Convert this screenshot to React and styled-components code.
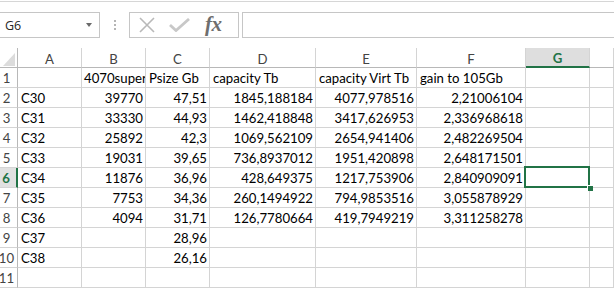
import React from 'react';
import styled, { createGlobalStyle, css } from 'styled-components';

const GREEN = '#217346';
const GRID = '#d4d4d4';

const GlobalStyle = createGlobalStyle`
  body {
    margin: 0;
    background: #fff;
    overflow: hidden;
  }
`;

const Page = styled.div`
  width: 614px;
  height: 292px;
  overflow: hidden;
  font-family: Lato, 'Liberation Sans', sans-serif;
`;

const TopRule = styled.div`
  margin-top: 1px;
  height: 1px;
  background: #d6d6d6;
`;

const FormulaBar = styled.div`
  display: flex;
  height: 26px;
  margin-top: 10px;
`;

const Box = styled.div`
  box-sizing: border-box;
  height: 100%;
  border: 1px solid #c6c6c6;
  background: #fff;
`;

const NameBox = styled(Box)`
  width: 101px;
  margin-left: -1px;
  display: flex;
  align-items: center;
  justify-content: space-between;
  padding: 0 7px 0 5px;
  font-family: 'Open Sans', 'Liberation Sans', sans-serif;
  font-size: 12.5px;
  color: #262626;
`;

const Arrow = styled.span`
  width: 0;
  height: 0;
  border-left: 3.5px solid transparent;
  border-right: 3.5px solid transparent;
  border-top: 4px solid #6a6a6a;
`;

const Grip = styled.div`
  width: 29px;
  display: flex;
  flex-direction: column;
  align-items: center;
  justify-content: center;
  gap: 2px;
`;

const Dot = styled.span`
  width: 2px;
  height: 2px;
  background: #b5b5b5;
`;

const ButtonBox = styled(Box)`
  width: 110px;
  display: flex;
  align-items: center;
  padding-left: 7px;
  gap: 12px;
`;

const Fx = styled.span`
  font-family: 'Liberation Serif', serif;
  font-style: italic;
  font-weight: 700;
  font-size: 21px;
  color: #6e6e6e;
  margin-left: 3px;
  margin-top: -2px;
  letter-spacing: -0.5px;
`;

const FormulaInput = styled(Box)`
  flex: 1;
  margin-left: 3px;
  border-right: none;
`;

const Sheet = styled.div`
  margin-top: 10px;
  display: grid;
  grid-template-columns: 18px 64px 64px 64px 106px 101px 109px 64px 1fr;
  grid-auto-rows: 20px;
  font-size: 13.2px;
  color: #000;
`;

const Cell = styled.div`
  position: relative;
  box-sizing: border-box;
  border-right: 1px solid ${GRID};
  border-bottom: 1px solid ${GRID};
  display: flex;
  align-items: center;
  padding: 1px 2px 0 ${(p) => (p.$tight ? 2 : 3)}px;
  white-space: nowrap;
  overflow: hidden;
  justify-content: ${(p) => (p.$num ? 'flex-end' : 'flex-start')};
  ${(p) => p.$sel && css`overflow: visible;`}
`;

const ColHead = styled(Cell)`
  justify-content: center;
  color: #444;
  border-bottom-color: #b8b8b8;
  padding: 2px 0 0;
  ${(p) =>
    p.$active &&
    css`
      background: #dedede;
      color: ${GREEN};
      font-weight: 700;
      border-bottom: 2px solid ${GREEN};
    `}
`;

const Corner = styled(ColHead)`
  border-right-color: #b8b8b8;
  align-items: flex-end;
  justify-content: flex-end;
  padding: 0 2px 1px 0;
`;

const RowHead = styled(Cell)`
  justify-content: center;
  padding: 1px 4px 0 0;
  color: #444;
  border-right-color: #b8b8b8;
  overflow: visible;
  ${(p) =>
    p.$active &&
    css`
      background: #e1e1e1;
      color: ${GREEN};
      font-weight: 700;
      border-right: 2px solid ${GREEN};
    `}
`;

const Selection = styled.div`
  position: absolute;
  top: -2px;
  left: -2px;
  right: -1px;
  bottom: -1px;
  border: 2px solid ${GREEN};
  z-index: 2;
`;

const Handle = styled.div`
  position: absolute;
  right: -5px;
  bottom: -5px;
  width: 5px;
  height: 5px;
  background: ${GREEN};
  border-left: 1px solid #fff;
  border-top: 1px solid #fff;
`;

const cols = ['A', 'B', 'C', 'D', 'E', 'F', 'G', ''];

const rows = [
  ['', '4070super', 'Psize Gb', 'capacity Tb', 'capacity Virt Tb', 'gain to 105Gb'],
  ['C30', '39770', '47,51', '1845,188184', '4077,978516', '2,21006104'],
  ['C31', '33330', '44,93', '1462,418848', '3417,626953', '2,336968618'],
  ['C32', '25892', '42,3', '1069,562109', '2654,941406', '2,482269504'],
  ['C33', '19031', '39,65', '736,8937012', '1951,420898', '2,648171501'],
  ['C34', '11876', '36,96', '428,649375', '1217,753906', '2,840909091'],
  ['C35', '7753', '34,36', '260,1494922', '794,9853516', '3,055878929'],
  ['C36', '4094', '31,71', '126,7780664', '419,7949219', '3,311258278'],
  ['C37', '', '28,96'],
  ['C38', '', '26,16'],
  [],
];

const isNum = (v) => /^[\d,]+$/.test(v);

function CornerMark() {
  return (
    <svg width="12" height="13" viewBox="0 0 12 13">
      <polygon points="12,0 12,13 0,13" fill="#dcdcdc" />
    </svg>
  );
}

export default function App() {
  return (
    <Page>
      <GlobalStyle />
      <TopRule />
      <FormulaBar>
        <NameBox>
          G6
          <Arrow />
        </NameBox>
        <Grip>
          <Dot />
          <Dot />
          <Dot />
        </Grip>
        <ButtonBox>
          <svg width="20" height="16" viewBox="0 0 20 16">
            <path d="M3 1 L17 15 M17 1 L3 15" stroke="#b9b9b9" strokeWidth="1.6" />
          </svg>
          <svg width="21" height="14" viewBox="0 0 21 14">
            <path d="M1 7 L7 12.5 L20 1" stroke="#c8c8c8" strokeWidth="2.8" fill="none" />
          </svg>
          <Fx>fx</Fx>
        </ButtonBox>
        <FormulaInput />
      </FormulaBar>
      <Sheet>
        <Corner>
          <CornerMark />
        </Corner>
        {cols.map((c, i) => (
          <ColHead key={i} $active={c === 'G'}>
            {c}
          </ColHead>
        ))}
        {rows.map((r, ri) => (
          <React.Fragment key={ri}>
            <RowHead $active={ri === 5}>{ri + 1}</RowHead>
            {cols.map((c, ci) => {
              const v = r[ci] || '';
              const sel = ri === 5 && c === 'G';
              return (
                <Cell
                  key={ci}
                  $num={isNum(v)}
                  $sel={sel}
                  $tight={v.length > 8 && !isNum(v) && ci === 1}
                >
                  {v}
                  {sel && (
                    <Selection>
                      <Handle />
                    </Selection>
                  )}
                </Cell>
              );
            })}
          </React.Fragment>
        ))}
      </Sheet>
    </Page>
  );
}
